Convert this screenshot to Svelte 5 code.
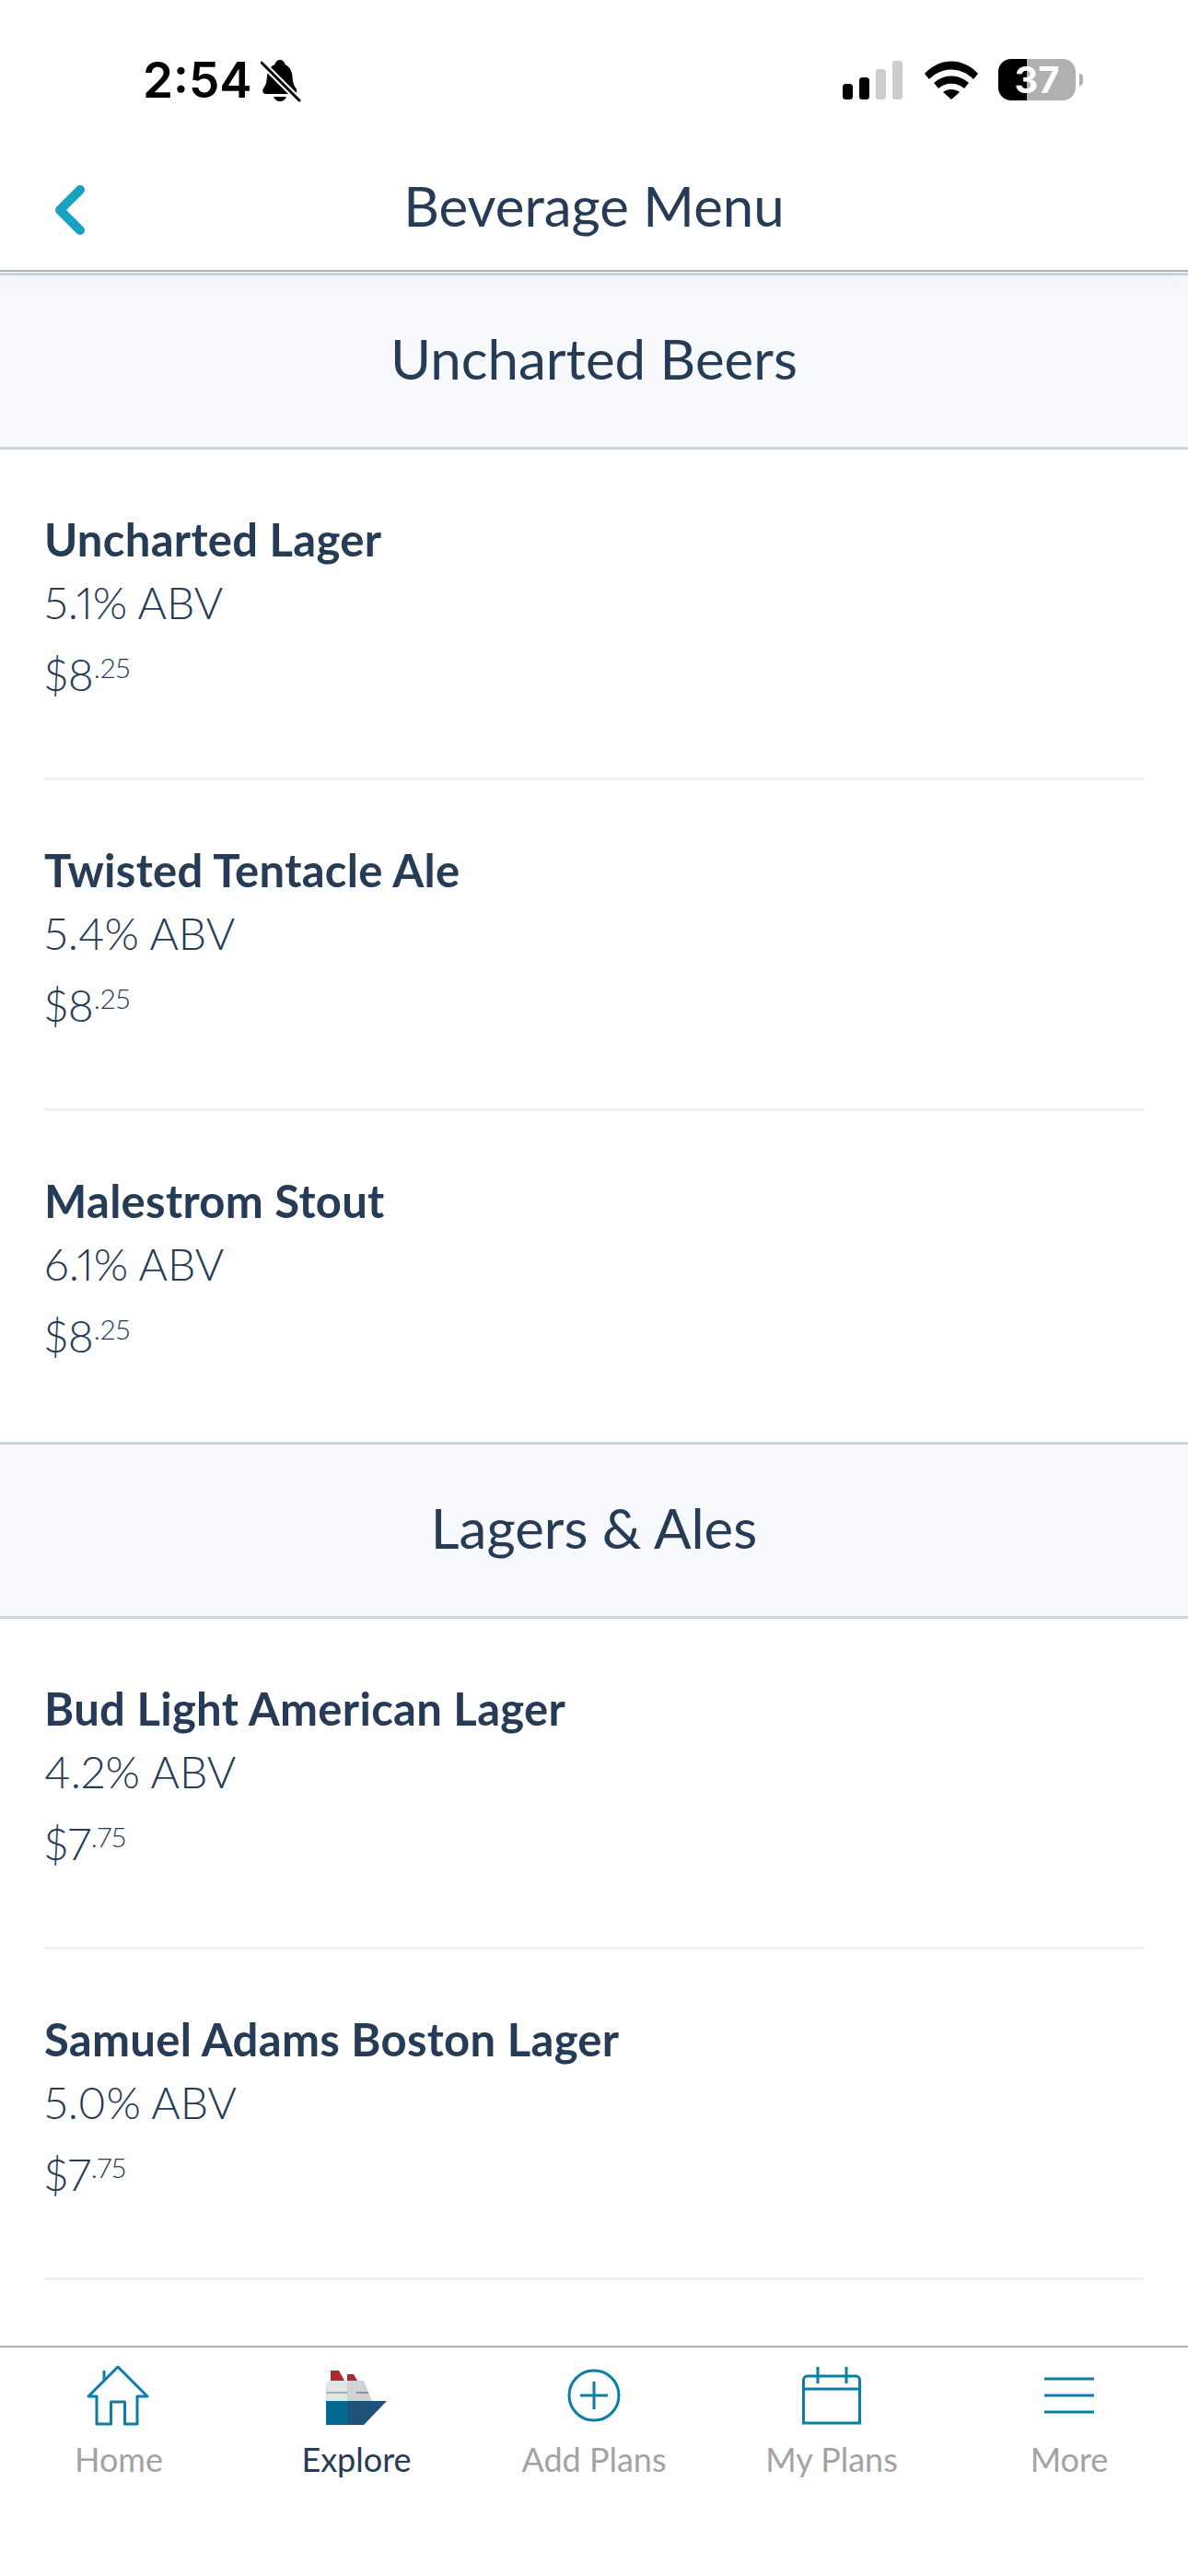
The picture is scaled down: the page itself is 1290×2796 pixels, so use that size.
<script>
  const sections = [
    {
      title: 'Uncharted Beers',
      items: [
        { name: 'Uncharted Lager', abv: '5.1% ABV', dollars: '8', cents: '25' },
        { name: 'Twisted Tentacle Ale', abv: '5.4% ABV', dollars: '8', cents: '25' },
        { name: 'Malestrom Stout', abv: '6.1% ABV', dollars: '8', cents: '25' }
      ]
    },
    {
      title: 'Lagers & Ales',
      items: [
        { name: 'Bud Light American Lager', abv: '4.2% ABV', dollars: '7', cents: '75' },
        { name: 'Samuel Adams Boston Lager', abv: '5.0% ABV', dollars: '7', cents: '75' },
        { name: '', abv: '', dollars: '', cents: '' }
      ]
    }
  ];
</script>

<div class="page">
  <header class="top">
    <div class="status">
      <span class="time">2:54</span>
      <svg class="bell" width="44" height="46" viewBox="0 0 44 46">
        <path d="M21 0c3 0 5 2 5.500 5c5 2 7.500 7 8 13c.5 6 1 9 4 13c1.500 2 .5 6-2 6H5c-2.500 0-3.500-4-2-6c3-4 3.500-7 4-13c.5-6 3-11 8.500-13C16 2 18 0 21 0z" fill="#000" />
        <path d="M14 40h14c-1 3-4 5-7 5s-6-2-7-5z" fill="#000" />
        <path d="M1 3l41 41" stroke="#fff" stroke-width="7" />
        <path d="M1 3l41 41" stroke="#000" stroke-width="3" stroke-linecap="round" />
      </svg>
      <svg class="signal" width="66" height="42" viewBox="0 0 66 42">
        <rect x="0" y="25" width="11" height="17" rx="3.500" fill="#000" />
        <rect x="18" y="18" width="11" height="24" rx="3.500" fill="#000" />
        <rect x="36" y="9" width="11" height="33" rx="3.500" fill="#ccc" />
        <rect x="54" y="0" width="11" height="42" rx="3.500" fill="#ccc" />
      </svg>
      <svg class="wifi" width="58" height="42" viewBox="0 0 58 42">
        <path d="M0 14C16-4 42-4 58 14l-5 6C39 6 19 6 5 20z" fill="#000" />
        <path d="M10 24c11-10 27-10 38 0l-5 6c-8-7-20-7-28 0z" fill="#000" />
        <path d="M20 34c5-4 13-4 18 0l-9 8z" fill="#000" />
      </svg>
      <div class="battery">37</div>
    </div>
    <nav class="nav">
      <svg class="back" width="36" height="56" viewBox="0 0 36 56">
        <path d="M29 6L7 28l22 22" fill="none" stroke="#17a2c2" stroke-width="10" stroke-linecap="round" stroke-linejoin="round" />
      </svg>
      <h1>Beverage Menu</h1>
    </nav>
  </header>

  <main class="list">
    {#each sections as section}
      <section>
        <h2>{section.title}</h2>
        {#each section.items as item}
          <div class="row">
            {#if item.name}
              <div class="name">{item.name}</div>
              <div class="abv">{item.abv}</div>
              <div class="price">${item.dollars}<sup>.{item.cents}</sup></div>
            {/if}
          </div>
        {/each}
      </section>
    {/each}
  </main>

  <footer class="tabs">
    <div class="tab">
      <svg viewBox="0 0 80 70" width="80" height="70" fill="none" stroke="#0a7ea8" stroke-width="3">
        <path d="M16 36v30h15.500V42h15v24H60V36h11L39 4 7 36z" stroke-linejoin="round" />
        <path d="M24 8v10" />
      </svg>
      <span>Home</span>
    </div>
    <div class="tab active">
      <svg viewBox="0 0 80 70" width="80" height="70">
        <path d="M12 8h9l6 11H12z" fill="#b2272f" />
        <path d="M30 12h7l4 7H30z" fill="#b2272f" />
        <path d="M7 41V23c0-2 2-4 4-4h19v22z" fill="#e1e5e8" />
        <path d="M30 19h18l9 22H30z" fill="#ced3d8" />
        <path d="M7 32h23" stroke="#a7adb2" stroke-width="2" />
        <path d="M40 32h13" stroke="#8d959e" stroke-width="2" />
        <path d="M7 41h23v26H7z" fill="#036a90" />
        <path d="M30 41h43L48 67H30z" fill="#1d5378" />
      </svg>
      <span>Explore</span>
    </div>
    <div class="tab">
      <svg viewBox="0 0 80 70" width="80" height="70" fill="none" stroke="#0a7ea8" stroke-width="3">
        <circle cx="40" cy="35" r="27" />
        <path d="M25 35h30M40 20v30" />
      </svg>
      <span>Add Plans</span>
    </div>
    <div class="tab">
      <svg viewBox="0 0 80 70" width="80" height="70" fill="none" stroke="#0a7ea8" stroke-width="3">
        <path d="M9.500 65V18c0-2 2-4 4-4h53c2 0 4 2 4 4v47z" />
        <path d="M9.500 28h61M25 4v18M56 4v18" />
      </svg>
      <span>My Plans</span>
    </div>
    <div class="tab">
      <svg viewBox="0 0 80 70" width="80" height="70" fill="none" stroke="#0a7ea8" stroke-width="3">
        <path d="M13 17h54M13 35h54M13 53h54" />
      </svg>
      <span>More</span>
    </div>
  </footer>
</div>

<style>
  :global(body) {
    margin: 0;
    background: #fff;
  }

  .page {
    width: 1290px;
    height: 2796px;
    display: flex;
    flex-direction: column;
    overflow: hidden;
    font-family: Lato, "Liberation Sans", sans-serif;
    color: #253b56;
  }

  .top {
    position: relative;
    z-index: 1;
    background: #fff;
    border-bottom: 2px solid #b0b0b0;
    box-shadow: 0 12px 30px rgba(30, 50, 70, 0.035);
  }

  .status {
    height: 165px;
    box-sizing: border-box;
    padding: 64px 122px 0 155px;
    display: flex;
    align-items: flex-start;
    color: #000;
  }

  .time {
    font-family: Inter, sans-serif;
    font-size: 53px;
    font-weight: 600;
    line-height: 46px;
  }

  .bell {
    margin: 1px 0 0 9px;
  }

  .signal {
    margin: 2px 0 0 auto;
  }

  .wifi {
    margin: 2px 0 0 23px;
  }

  .battery {
    position: relative;
    width: 84px;
    height: 45px;
    margin-left: 22px;
    border-radius: 14px;
    background: linear-gradient(90deg, #000 37%, #b0b0b0 37%);
    color: #fff;
    font-family: Inter, sans-serif;
    font-size: 40px;
    font-weight: 700;
    line-height: 45px;
    text-align: center;
  }

  .battery::after {
    content: '';
    position: absolute;
    left: 88px;
    top: 16px;
    width: 4px;
    height: 13px;
    border-radius: 0 4px 4px 0;
    background: #b0b0b0;
  }

  .nav {
    height: 128px;
    position: relative;
    display: flex;
    align-items: center;
    justify-content: center;
  }

  .back {
    position: absolute;
    left: 58px;
    top: 35px;
  }

  h1 {
    margin: 0 0 12px;
    font-size: 60px;
    font-weight: 400;
    line-height: 70px;
  }

  .list {
    flex: 1;
    min-height: 0;
    overflow: hidden;
    padding-top: 1px;
  }

  h2 {
    margin: 0;
    height: 192px;
    box-sizing: border-box;
    padding-bottom: 6px;
    background: #f7f9fd;
    border-top: 3px solid #ccd6de;
    border-bottom: 3px solid #ccd6de;
    display: flex;
    align-items: center;
    justify-content: center;
    font-size: 60px;
    font-weight: 400;
  }

  .row {
    height: 359px;
    box-sizing: border-box;
    margin: 0 48px;
    padding-top: 68px;
    border-bottom: 3px solid #edf1f5;
  }

  section:first-child .row:last-child {
    border-bottom: none;
  }

  .name {
    font-size: 49px;
    font-weight: 700;
    letter-spacing: 0.3px;
    line-height: 58px;
  }

  .abv {
    font-size: 48px;
    font-weight: 300;
    font-variant-numeric: proportional-nums;
    line-height: 70px;
    margin-top: 5px;
  }

  .price {
    font-size: 48px;
    font-weight: 300;
    font-variant-numeric: proportional-nums;
    line-height: 70px;
    margin-top: 8px;
  }

  sup {
    font-size: 30px;
    font-weight: 300;
    line-height: 0;
    vertical-align: 14px;
  }

  .tabs {
    height: 250px;
    box-sizing: border-box;
    border-top: 2px solid #b0b0b0;
    padding-top: 17px;
    display: grid;
    grid-template-columns: repeat(5, 1fr);
    background: #fff;
  }

  .tab {
    display: flex;
    flex-direction: column;
    align-items: center;
    color: #a3a3a3;
    font-size: 36px;
    line-height: 44px;
  }

  .tab span {
    margin-top: 12px;
  }

  .tab.active {
    color: #253b56;
  }
</style>
